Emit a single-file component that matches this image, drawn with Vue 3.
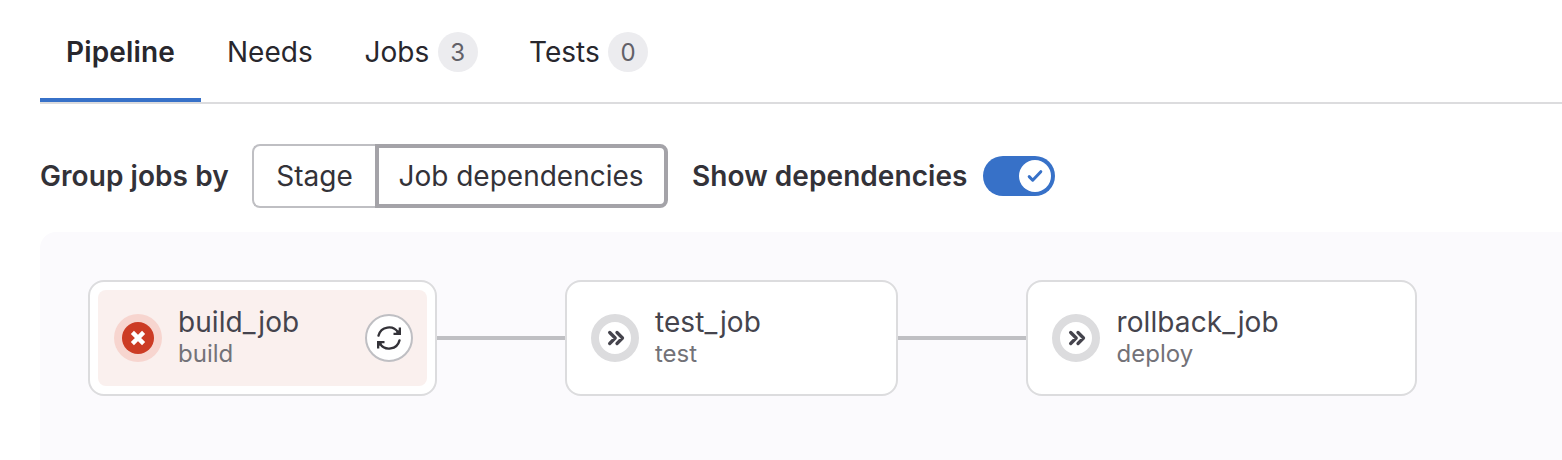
<script setup>
const tabs = [
  { id: 'pipeline', label: 'Pipeline', active: true },
  { id: 'needs', label: 'Needs' },
  { id: 'jobs', label: 'Jobs', count: 3 },
  { id: 'tests', label: 'Tests', count: 0 },
]
const jobs = [
  { id: 'build', name: 'build_job', stage: 'build', status: 'failed' },
  { id: 'test', name: 'test_job', stage: 'test', status: 'skipped' },
  { id: 'deploy', name: 'rollback_job', stage: 'deploy', status: 'skipped' },
]
</script>

<template>
  <main class="page">
    <nav class="tabs">
      <a v-for="t in tabs" :key="t.id" class="tab" :class="[t.id, { active: t.active }]">
        <span class="label">{{ t.label }}</span>
        <span v-if="t.count !== undefined" class="badge">{{ t.count }}</span>
      </a>
    </nav>

    <div class="controls">
      <span class="control-label group-label">Group jobs by</span>
      <div class="segmented">
        <button class="segment stage"><span>Stage</span></button>
        <button class="segment selected"><span>Job dependencies</span></button>
      </div>
      <span class="control-label show-label">Show dependencies</span>
      <span class="toggle">
        <span class="knob">
          <svg width="24" height="24" viewBox="0 0 24 24" fill="none" stroke="#3771c8" stroke-width="3" stroke-linecap="round" stroke-linejoin="round">
            <path d="M6.200 12.600l3.500 3.600L17.800 7.700" />
          </svg>
        </span>
      </span>
    </div>

    <section class="graph">
      <template v-for="(job, i) in jobs" :key="job.id">
        <span v-if="i > 0" class="link"></span>
        <article class="card" :class="job.id">
          <div class="job" :class="job.status">
            <svg v-if="job.status === 'failed'" class="status" viewBox="0 0 48 48">
              <circle cx="24" cy="24" r="24" fill="#f7d5cf" />
              <circle cx="24" cy="24" r="16" fill="#cc3b24" />
              <path d="M18.400 18.400l11.200 11.200M29.600 18.400l-11.200 11.200" stroke="#fff" stroke-width="4.400" />
            </svg>
            <svg v-else class="status" viewBox="0 0 48 48">
              <circle cx="24" cy="24" r="20" fill="#fff" stroke="#dcdcde" stroke-width="8" />
              <path d="M18.700 18.500L24.200 24l-5.500 5.500M26 18.500L31.500 24 26 29.500" fill="none" stroke="#45444d" stroke-width="3.300" stroke-linecap="round" stroke-linejoin="round" />
            </svg>
            <div class="text">
              <span class="name">{{ job.name }}</span>
              <span class="stage-name">{{ job.stage }}</span>
            </div>
            <button v-if="job.status === 'failed'" class="retry" aria-label="Retry">
              <svg width="24" height="24" viewBox="0 0 24 24">
                <path d="M1.500 9.600A10.800 10.800 0 0 1 21.200 6.600M22.500 14.400A10.800 10.800 0 0 1 2.800 17.400" fill="none" stroke="#333238" stroke-width="2.300" stroke-linecap="round" />
                <path d="M24 1.500V9H16.500V6.700H19L21.700 4V1.500zM0 22.500V15H7.500V17.300H5L2.300 20V22.500z" fill="#333238" />
              </svg>
            </button>
          </div>
        </article>
      </template>
    </section>
  </main>
</template>

<style>
body { margin: 0; background: #fff; }
</style>

<style scoped>
* { box-sizing: border-box; }
.page {
  height: 460px;
  padding-left: 40px;
  overflow: hidden;
  font-family: Inter, "Liberation Sans", sans-serif;
  font-size: 28px;
  color: #28272d;
  white-space: nowrap;
}
.tabs { display: flex; height: 104px; border-bottom: 2px solid #dcdcde; }
.tab { display: flex; align-items: center; height: 102px; padding: 2px 26px 0; }
.tab.active { width: 161px; font-weight: 600; letter-spacing: 0.14px; border-bottom: 4px solid #3771c8; padding-top: 6px; }
.needs { width: 138px; }
.jobs { width: 165px; padding-left: 25.500px; }
.tests { padding-left: 25px; }
.badge {
  display: flex; align-items: center; justify-content: center;
  flex: none; width: 40px; height: 40px; margin-left: 8.500px;
  border-radius: 20px; background: #ececef; color: #626168; font-size: 24px;
}
.controls { display: flex; align-items: center; height: 64px; margin-top: 40px; color: #333238; }
.control-label { font-weight: 600; letter-spacing: 0.06px; }
.group-label { width: 212px; }
.segmented { display: flex; width: 416px; }
.segment {
  height: 64px; padding: 0; background: #fff; font: inherit; color: inherit; white-space: nowrap;
}
.stage { width: 123px; border: 2px solid #bfbfc3; border-right: 0; border-radius: 8px 0 0 8px; }
.selected { width: 293px; padding-right: 1px; border: 4px solid #a4a3a8; border-radius: 0 8px 8px 0; }
.show-label { width: 291px; margin-left: 24px; }
.toggle { display: flex; justify-content: flex-end; width: 72px; height: 40px; padding: 4px; border-radius: 20px; background: #3771c8; }
.knob { width: 32px; height: 32px; padding: 4px; border-radius: 50%; background: #fff; }
.knob svg { display: block; }
.graph {
  display: flex; align-items: flex-start;
  height: 260px; margin-top: 24px; padding: 48px 0 0 48px;
  border-radius: 16px 0 0 0; background: #fbfafd;
}
.card { flex: none; height: 116px; padding: 8px; border: 2px solid #dcdcde; border-radius: 16px; background: #fff; }
.card.build { width: 349px; }
.card.test { width: 333px; }
.card.deploy { width: 391px; }
.job { display: flex; align-items: center; height: 96px; padding: 0 14px 0 16px; border-radius: 8px; }
.failed { background: #faf0ee; }
.status { flex: none; width: 48px; height: 48px; }
.text { display: flex; flex-direction: column; flex: 1; margin-left: 16px; padding-bottom: 2px; }
.deploy .text { margin-left: 16.600px; }
.name { line-height: 34px; color: #45444d; letter-spacing: 0.08px; }
.stage-name { font-size: 24px; line-height: 30px; color: #737278; }
.link { flex: none; width: 128px; height: 4px; margin-top: 56px; background: #bfbfc3; }
.retry {
  display: flex; flex: none; align-items: center; justify-content: center;
  width: 48px; height: 48px; padding: 0; border: 2px solid #bfbfc3; border-radius: 50%; background: #fff;
}
</style>
